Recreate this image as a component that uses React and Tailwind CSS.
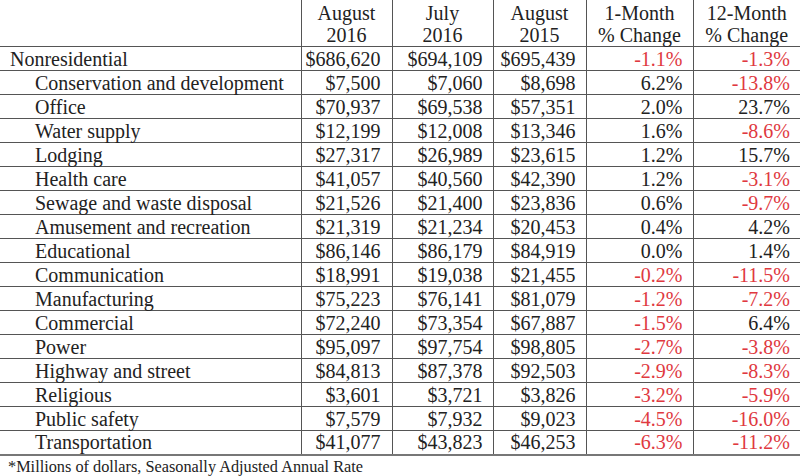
import React from "react";

const rows = [
  ["Nonresidential", "$686,620", "$694,109", "$695,439", "-1.1%", "-1.3%", false],
  ["Conservation and development", "$7,500", "$7,060", "$8,698", "6.2%", "-13.8%", true],
  ["Office", "$70,937", "$69,538", "$57,351", "2.0%", "23.7%", true],
  ["Water supply", "$12,199", "$12,008", "$13,346", "1.6%", "-8.6%", true],
  ["Lodging", "$27,317", "$26,989", "$23,615", "1.2%", "15.7%", true],
  ["Health care", "$41,057", "$40,560", "$42,390", "1.2%", "-3.1%", true],
  ["Sewage and waste disposal", "$21,526", "$21,400", "$23,836", "0.6%", "-9.7%", true],
  ["Amusement and recreation", "$21,319", "$21,234", "$20,453", "0.4%", "4.2%", true],
  ["Educational", "$86,146", "$86,179", "$84,919", "0.0%", "1.4%", true],
  ["Communication", "$18,991", "$19,038", "$21,455", "-0.2%", "-11.5%", true],
  ["Manufacturing", "$75,223", "$76,141", "$81,079", "-1.2%", "-7.2%", true],
  ["Commercial", "$72,240", "$73,354", "$67,887", "-1.5%", "6.4%", true],
  ["Power", "$95,097", "$97,754", "$98,805", "-2.7%", "-3.8%", true],
  ["Highway and street", "$84,813", "$87,378", "$92,503", "-2.9%", "-8.3%", true],
  ["Religious", "$3,601", "$3,721", "$3,826", "-3.2%", "-5.9%", true],
  ["Public safety", "$7,579", "$7,932", "$9,023", "-4.5%", "-16.0%", true],
  ["Transportation", "$41,077", "$43,823", "$46,253", "-6.3%", "-11.2%", true],
];

const pct = (v) => (v.startsWith("-") ? "text-[#e0393f]" : "text-[#222]");

export default function App() {
  return (
    <div className="w-[800px] h-[476px] bg-white overflow-hidden text-[#222] [font-family:'Liberation_Serif',serif]">
      <table className="w-[800px] table-fixed border-collapse text-[20px] leading-[22px]">
        <colgroup>
          <col className="w-[301px]" />
          <col className="w-[91px]" />
          <col className="w-[101px]" />
          <col className="w-[93px]" />
          <col className="w-[107px]" />
          <col className="w-[107px]" />
        </colgroup>
        <thead>
          <tr className="h-[45px] border-b border-[#555]">
            <th className="border-r border-[#555]"></th>
            <th className="border-r border-[#555] font-normal text-center align-middle pt-[2px]">August<br />2016</th>
            <th className="border-r border-[#555] font-normal text-center align-middle pt-[2px]">July<br />2016</th>
            <th className="border-r border-[#555] font-normal text-center align-middle pt-[2px]">August<br />2015</th>
            <th className="border-r border-[#555] font-normal text-center align-middle pt-[2px]">1-Month<br />% Change</th>
            <th className="font-normal text-center align-middle pt-[2px]">12-Month<br />% Change</th>
          </tr>
        </thead>
        <tbody>
          {rows.map((r, i) => (
            <tr
              key={r[0]}
              className={
                i === rows.length - 1
                  ? "h-[24px] border-b-2 border-[#777]"
                  : "h-[24px] border-b border-[#555]"
              }
            >
              <td className={`border-r border-[#555] p-0 ${r[6] ? "pl-[35px]" : "pl-[10px]"}`}>{r[0]}</td>
              <td className="border-r border-[#555] p-0 pr-[11px] text-right">{r[1]}</td>
              <td className="border-r border-[#555] p-0 pr-[10px] text-right">{r[2]}</td>
              <td className="border-r border-[#555] p-0 pr-[10px] text-right">{r[3]}</td>
              <td className={`border-r border-[#555] p-0 pr-[10px] text-right ${pct(r[4])}`}>{r[4]}</td>
              <td className={`p-0 pr-[10px] text-right ${pct(r[5])}`}>{r[5]}</td>
            </tr>
          ))}
        </tbody>
      </table>
      <div className="pl-[8px] pt-[1px] text-[16.3px] leading-[20px]">*Millions of dollars, Seasonally Adjusted Annual Rate</div>
    </div>
  );
}
